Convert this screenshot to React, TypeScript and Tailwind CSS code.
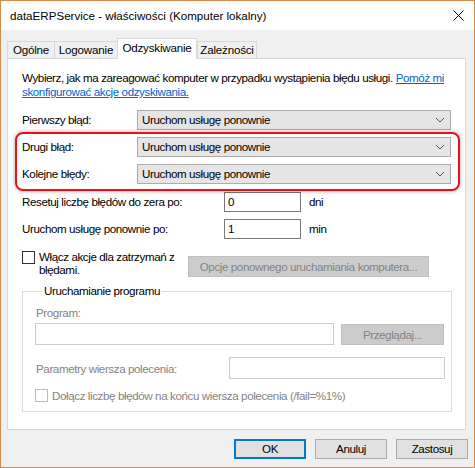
import React from "react";

const font = { fontFamily: '"Liberation Sans", Arial, sans-serif' };

function Chevron() {
  return (
    <svg width="10" height="6" viewBox="0 0 10 6" className="mr-[5px]">
      <polyline points="1,1 5,5 9,1" fill="none" stroke="#555" strokeWidth="1" />
    </svg>
  );
}

function Select({ value }: { value: string }) {
  return (
    <div className="w-[314px] h-[20px] bg-[#e5e5e5] border border-[#acacac] flex items-center justify-between pl-[4px]">
      <span>{value}</span>
      <Chevron />
    </div>
  );
}

function SelectRow({ label, mt }: { label: string; mt: string }) {
  return (
    <div className={`flex items-center h-[20px] ${mt}`}>
      <span className="w-[115px]">{label}</span>
      <Select value="Uruchom usługę ponownie" />
    </div>
  );
}

function Tab({ label, w, active, last }: { label: string; w: string; active?: boolean; last?: boolean }) {
  if (active) {
    return (
      <div className={`${w} h-[21px] -mb-px relative z-10 bg-white border border-b-0 border-[#d9d9d9] flex items-center justify-center pb-[2px]`}>
        {label}
      </div>
    );
  }
  return (
    <div className={`${w} h-[17px] bg-[#f0f0f0] border-t border-l ${last ? "border-r" : ""} border-[#d9d9d9] flex items-center justify-center`}>
      {label}
    </div>
  );
}

export default function App() {
  return (
    <div style={font} className="w-[475px] h-[468px] border border-[#d88a4a] bg-[#f0f0f0] flex flex-col text-[11.6px] tracking-[-0.4px] text-black whitespace-nowrap">
      {/* title bar */}
      <div className="h-[29px] bg-white flex items-center justify-between pl-[9px] pr-[10px] shrink-0">
        <span className="tracking-normal">dataERPService - właściwości (Komputer lokalny)</span>
        <svg width="11" height="11" viewBox="0 0 11 11">
          <path d="M0.5 0.5 L10.5 10.5 M10.5 0.5 L0.5 10.5" stroke="#000" strokeWidth="1" />
        </svg>
      </div>

      {/* tabs */}
      <div className="flex items-end h-[20px] mt-[8px] pl-[6px] shrink-0 tracking-[-0.2px]">
        <Tab label="Ogólne" w="w-[47px]" />
        <Tab label="Logowanie" w="w-[63px]" />
        <Tab label="Odzyskiwanie" w="w-[80px]" active />
        <Tab label="Zależności" w="w-[60px]" last />
      </div>

      {/* panel */}
      <div className="relative ml-[6px] w-[459px] h-[372px] border border-[#d9d9d9] bg-white px-[14px] shrink-0">
        <p className="mt-[12px] leading-[14px]">
          Wybierz, jak ma zareagować komputer w przypadku wystąpienia błędu usługi.{" "}
          <span className="text-[#0066cc] underline">Pomóż mi</span>
          <br />
          <span className="text-[#0066cc] underline">skonfigurować akcje odzyskiwania.</span>
        </p>

        <SelectRow label="Pierwszy błąd:" mt="mt-[11px]" />
        <SelectRow label="Drugi błąd:" mt="mt-[7px]" />
        <SelectRow label="Kolejne błędy:" mt="mt-[7px]" />

        <div className="flex items-center h-[20px] mt-[8px]">
          <span className="w-[202px]">Resetuj liczbę błędów do zera po:</span>
          <div className="w-[77px] h-[20px] border border-[#7a7a7a] flex items-center pl-[3px]">0</div>
          <span className="ml-[8px]">dni</span>
        </div>
        <div className="flex items-center h-[20px] mt-[7px]">
          <span className="w-[202px]">Uruchom usługę ponownie po:</span>
          <div className="w-[77px] h-[20px] border border-[#7a7a7a] flex items-center pl-[3px]">1</div>
          <span className="ml-[8px]">min</span>
        </div>

        <div className="flex items-start mt-[11px]">
          <div className="w-[13px] h-[13px] border border-[#333] bg-white mt-[1px] shrink-0" />
          <span className="ml-[4px] w-[145px] leading-[13px]">
            Włącz akcje dla zatrzymań z
            <br />
            błędami.
          </span>
          <div className="ml-[4px] mt-[6px] w-[241px] h-[21px] bg-[#cccccc] border border-[#bfbfbf] text-[#838383] flex items-center justify-center">
            Opcje ponownego uruchamiania komputera...
          </div>
        </div>

        <fieldset className="mt-[7px] w-[430px] border border-[#dcdcdc] pl-[12px] pb-[9px]">
          <legend className="ml-[7px] px-[2px] leading-[14px]">Uruchamianie programu</legend>
          <div className="mt-[8px] leading-[14px] text-[#838383] pl-[1px]">Program:</div>
          <div className="flex mt-[3px]">
            <div className="w-[299px] h-[22px] border border-[#cccccc]" />
            <div className="ml-[7px] w-[103px] h-[21px] mt-[1px] bg-[#cccccc] border border-[#bfbfbf] text-[#838383] flex items-center justify-center">
              Przeglądaj...
            </div>
          </div>
          <div className="flex items-center mt-[12px] h-[22px]">
            <span className="w-[194px] pl-[1px] text-[#838383] pt-[2px]">Parametry wiersza polecenia:</span>
            <div className="w-[216px] h-[22px] border border-[#cccccc]" />
          </div>
          <div className="flex items-center mt-[10px] h-[13px]">
            <div className="w-[13px] h-[13px] border border-[#bcbcbc] shrink-0" />
            <span className="ml-[4px] text-[#838383]">Dołącz liczbę błędów na końcu wiersza polecenia (/fail=%1%)</span>
          </div>
        </fieldset>

        {/* red highlight annotation */}
        <div className="absolute left-[7px] top-[73px] w-[445px] h-[59px] border-2 border-[#e8101a] rounded-[8px] shadow-[0_0_4px_rgba(0,0,0,0.35)] pointer-events-none" />
      </div>

      {/* buttons */}
      <div className="flex justify-end gap-[9px] mt-[9px] pr-[6px]">
        <div className="w-[72px] h-[20px] bg-[#e1e1e1] border-2 border-[#0078d7] flex items-center justify-center">OK</div>
        <div className="w-[72px] h-[20px] bg-[#e1e1e1] border border-[#adadad] flex items-center justify-center">Anuluj</div>
        <div className="w-[72px] h-[20px] bg-[#e1e1e1] border border-[#adadad] flex items-center justify-center">Zastosuj</div>
      </div>
    </div>
  );
}
